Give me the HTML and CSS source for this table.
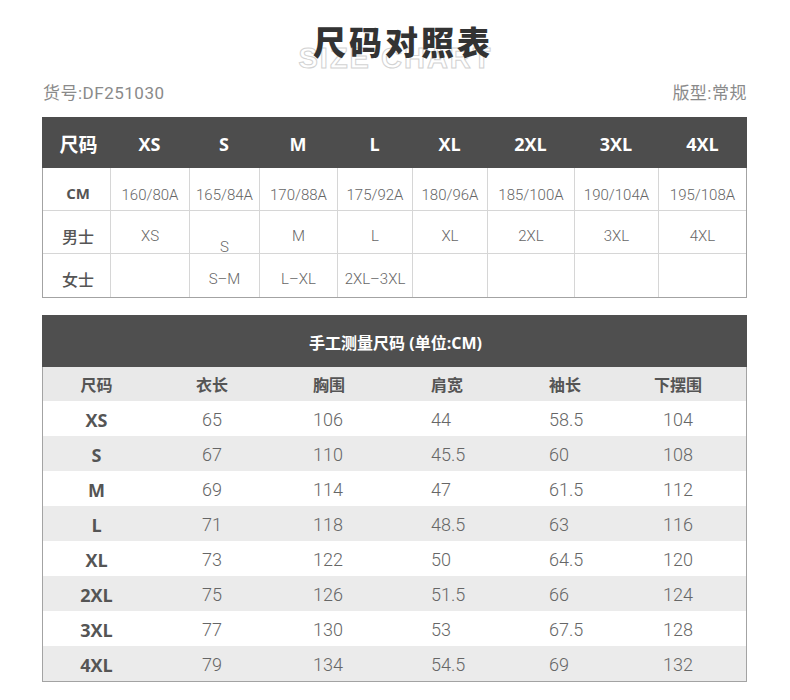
FILE: index.html
```html
<!DOCTYPE html>
<html lang="zh-CN">
<head>
<meta charset="utf-8">
<title>尺码对照表</title>
<link rel="stylesheet" href="styles.css">
</head>
<body>
<div class="page">
  <div class="head">
    <div class="head-bg">SIZE CHART</div>
    <h1 class="title">尺码对照表</h1>
  </div>
  <div class="meta">
    <span>货号:DF251030</span>
    <span>版型:常规</span>
  </div>

  <div class="t1">
    <div class="t1-head">
      <div class="cjk">尺码</div><div>XS</div><div>S</div><div>M</div><div>L</div><div>XL</div><div>2XL</div><div>3XL</div><div>4XL</div>
    </div>
    <div class="t1-body">
      <div class="t1-row r-cm">
        <div class="lab lab-cm">CM</div><div>160/80A</div><div>165/84A</div><div>170/88A</div><div>175/92A</div><div>180/96A</div><div>185/100A</div><div>190/104A</div><div>195/108A</div>
      </div>
      <div class="t1-row r-men">
        <div class="lab">男士</div><div>XS</div><div class="low">S</div><div>M</div><div>L</div><div>XL</div><div>2XL</div><div>3XL</div><div>4XL</div>
      </div>
      <div class="t1-row r-women">
        <div class="lab">女士</div><div></div><div>S–M</div><div>L–XL</div><div>2XL–3XL</div><div></div><div></div><div></div><div></div>
      </div>
    </div>
  </div>

  <div class="t2">
    <div class="t2-title">手工测量尺码 (单位:CM)</div>
    <div class="t2-body">
      <div class="t2-row t2-sub">
        <div class="c1">尺码</div><div class="c2">衣长</div><div class="c3">胸围</div><div class="c4">肩宽</div><div class="c5">袖长</div><div class="c6">下摆围</div>
      </div>
      <div class="t2-row">
        <div class="c1 sz">XS</div><div class="c2">65</div><div class="c3">106</div><div class="c4">44</div><div class="c5">58.5</div><div class="c6">104</div>
      </div>
      <div class="t2-row alt">
        <div class="c1 sz">S</div><div class="c2">67</div><div class="c3">110</div><div class="c4">45.5</div><div class="c5">60</div><div class="c6">108</div>
      </div>
      <div class="t2-row">
        <div class="c1 sz">M</div><div class="c2">69</div><div class="c3">114</div><div class="c4">47</div><div class="c5">61.5</div><div class="c6">112</div>
      </div>
      <div class="t2-row alt">
        <div class="c1 sz">L</div><div class="c2">71</div><div class="c3">118</div><div class="c4">48.5</div><div class="c5">63</div><div class="c6">116</div>
      </div>
      <div class="t2-row">
        <div class="c1 sz">XL</div><div class="c2">73</div><div class="c3">122</div><div class="c4">50</div><div class="c5">64.5</div><div class="c6">120</div>
      </div>
      <div class="t2-row alt">
        <div class="c1 sz">2XL</div><div class="c2">75</div><div class="c3">126</div><div class="c4">51.5</div><div class="c5">66</div><div class="c6">124</div>
      </div>
      <div class="t2-row">
        <div class="c1 sz">3XL</div><div class="c2">77</div><div class="c3">130</div><div class="c4">53</div><div class="c5">67.5</div><div class="c6">128</div>
      </div>
      <div class="t2-row alt">
        <div class="c1 sz">4XL</div><div class="c2">79</div><div class="c3">134</div><div class="c4">54.5</div><div class="c5">69</div><div class="c6">132</div>
      </div>
    </div>
  </div>
</div>
</body>
</html>
```

FILE: styles.css
```css
* { box-sizing: border-box; }

html, body {
  margin: 0;
  padding: 0;
  background: #ffffff;
}

body {
  font-family: "Noto Sans CJK SC", "Noto Sans", sans-serif;
  color: #555;
}

.page {
  width: 790px;
  padding: 0 43px 0 42px;
}

/* ---------- heading ---------- */
.head {
  position: relative;
  height: 80px;
}

.head-bg {
  position: absolute;
  left: 0;
  right: 0;
  top: 44px;
  text-align: center;
  font-family: "Liberation Sans", Arial, sans-serif;
  font-weight: 700;
  font-size: 29px;
  line-height: 29px;
  letter-spacing: 2px;
  padding-left: 2px;
  color: transparent;
  -webkit-text-stroke: 1px #d2d2d2;
}

.title {
  position: relative;
  margin: 0;
  padding-top: 25px;
  padding-left: 17px;
  text-align: center;
  font-family: "Noto Sans CJK SC", sans-serif;
  font-weight: 900;
  font-size: 33px;
  line-height: 33px;
  letter-spacing: 3px;
  color: #333;
}

.meta {
  display: flex;
  justify-content: space-between;
  height: 26px;
  line-height: 26px;
  font-family: "Roboto", "Noto Sans CJK SC", sans-serif;
  font-size: 17px;
  letter-spacing: 0.5px;
  color: #8a8a8a;
  padding-left: 1px;
}

/* ---------- table 1 ---------- */
.t1 {
  margin-top: 11px;
  width: 705px;
}

.t1-head {
  display: grid;
  grid-template-columns: 68px 79px 70px 78px 75px 75px 87px 84px 89px;
  height: 51px;
  background: #4d4d4d;
  color: #fff;
  font-family: "Open Sans", "Noto Sans CJK SC", sans-serif;
  font-weight: 700;
  font-size: 18px;
}

.t1-head > div {
  display: flex;
  align-items: center;
  justify-content: center;
  padding-top: 3px;
}

.t1-head > .cjk {
  font-size: 19px;
  padding-left: 5px;
}

.t1-body {
  border: 1px solid #a3a3a3;
  border-top: none;
}

.t1-row {
  display: grid;
  grid-template-columns: 67px 79px 70px 78px 75px 75px 87px 84px 88px;
  height: 43px;
  border-bottom: 1px solid #d6d6d6;
  font-family: "Roboto", "Noto Sans CJK SC", sans-serif;
  font-weight: 300;
  font-size: 15px;
  color: #666;
}

.t1-row:last-child {
  border-bottom: none;
}

.t1-row > div {
  display: flex;
  align-items: center;
  justify-content: center;
  border-left: 1px solid #d6d6d6;
}

.t1-row > div:first-child {
  border-left: none;
}

.r-cm > div { padding-top: 11px; }
.r-cm > .lab { padding-top: 7px; }
.r-men > div { padding-top: 4px; }
.r-men > .low { padding-top: 27px; }
.r-women > div { padding-top: 6px; }

.lab {
  font-family: "Noto Sans CJK SC", sans-serif;
  font-weight: 500;
  font-size: 16px;
  color: #555;
  padding-left: 3px;
}

.t1-row > .lab-cm {
  font-family: "Open Sans", "Noto Sans CJK SC", sans-serif;
  font-weight: 700;
  font-size: 15px;
}

/* ---------- table 2 ---------- */
.t2 {
  margin-top: 17px;
  width: 705px;
}

.t2-title {
  height: 52px;
  background: #4f4f4f;
  color: #fff;
  display: flex;
  align-items: center;
  justify-content: center;
  padding-left: 2px;
  padding-top: 2px;
  font-family: "Open Sans", "Noto Sans CJK SC", sans-serif;
  font-weight: 700;
  font-size: 16px;
}

.t2-body {
  border: 1px solid #a3a3a3;
  border-top: none;
}

.t2-row {
  display: grid;
  grid-template-columns: 107px 124px 118px 118px 118px 118px;
  height: 35px;
  align-items: center;
  font-family: "Roboto", "Noto Sans CJK SC", sans-serif;
  font-weight: 300;
  font-size: 18px;
  color: #666;
  padding-top: 2px;
}

.t2-row.alt {
  background: #ebebeb;
}

.t2-sub {
  height: 34px;
  background: #e9e9e9;
  font-family: "Noto Sans CJK SC", sans-serif;
  font-weight: 700;
  font-size: 16px;
  color: #555;
  padding-top: 0;
}

.c1, .c2 { text-align: center; }
.c3, .c4, .c5 { padding-left: 39px; }
.c6 { text-align: center; padding-right: 18px; }

.sz {
  font-family: "Open Sans", sans-serif;
  font-weight: 700;
  font-size: 18px;
  color: #555;
}
```
